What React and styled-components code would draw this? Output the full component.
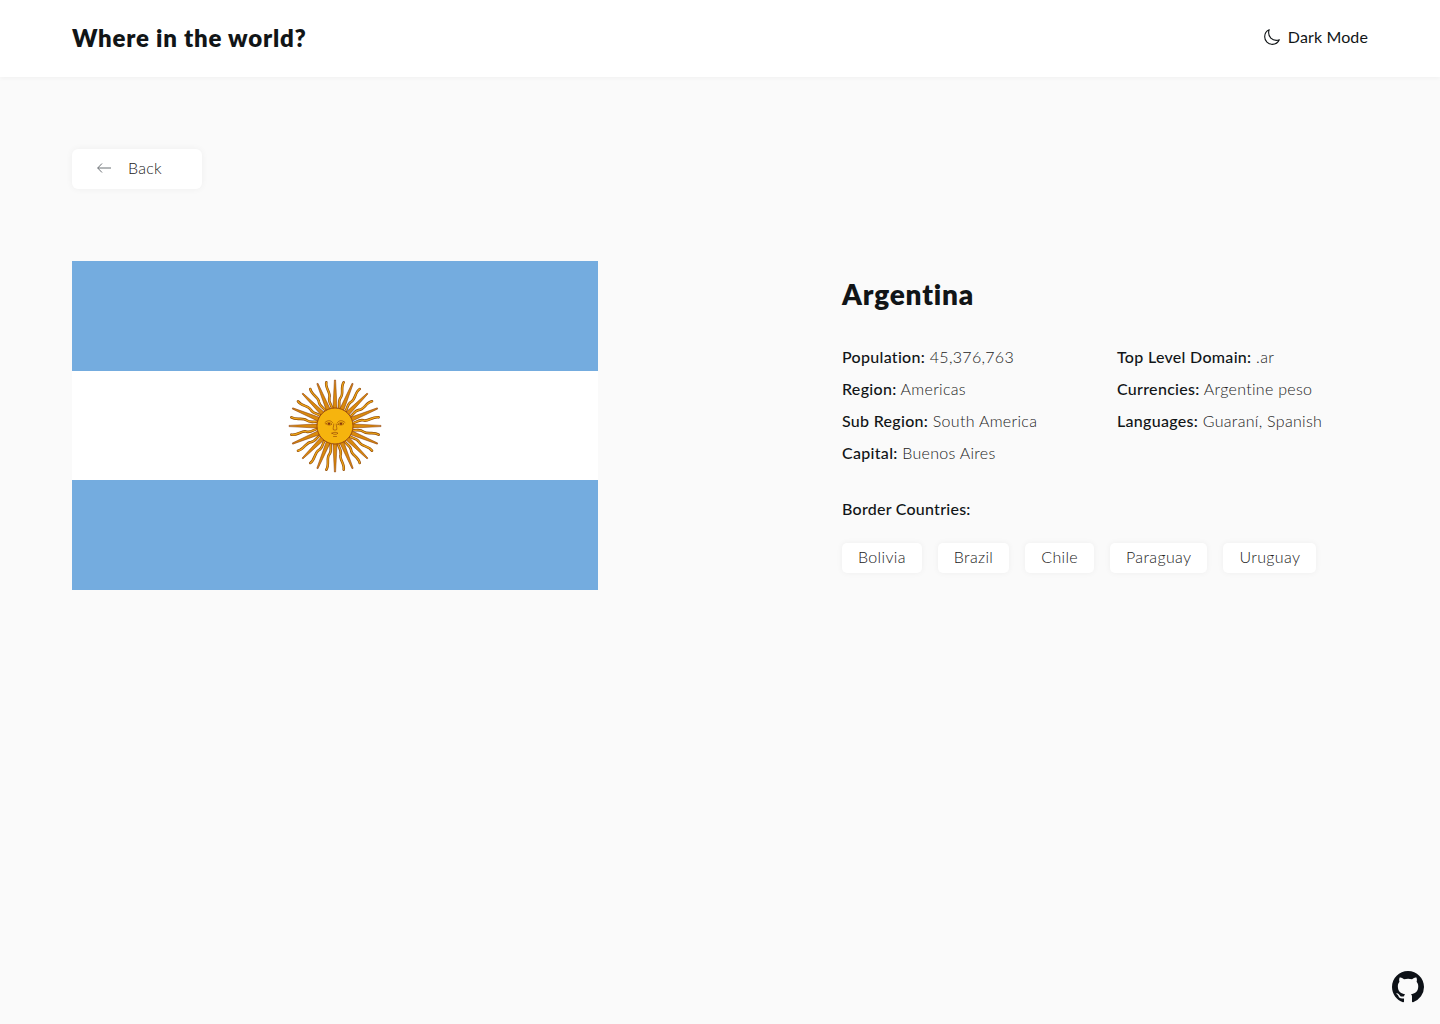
import React from "react";
import styled, { createGlobalStyle } from "styled-components";
import { IoMoonOutline } from "react-icons/io5";

const Global = createGlobalStyle`
  html, body { margin: 0; padding: 0; background: #fafafa; }
  body { font-family: "Lato", "Open Sans", sans-serif; color: #111517; min-height: 1024px; font-variant-ligatures: none; }
`;

const Header = styled.header`
  height: 77px; box-sizing: border-box; padding: 0 72px 4px; background: #fff;
  display: flex; align-items: center; justify-content: space-between;
  box-shadow: 0 2px 4px rgba(0,0,0,.03);
`;
const Logo = styled.h1`
  margin: 2px 0 0; font-size: 24px; font-weight: 800; letter-spacing: 0.78px; color: #111517;
`;
const ThemeToggle = styled.button`
  display: flex; align-items: center; gap: 7px; padding: 0; border: 0; background: none;
  font: 400 16px "Lato", sans-serif; letter-spacing: 0.12px; color: #111517;
`;
const Main = styled.main`
  padding: 72px 72px 0;
`;
const BackButton = styled.button`
  width: 130px; height: 40px; padding: 0 0 4px 25px; box-sizing: border-box; border: 0; border-radius: 6px; background: #fff;
  display: flex; align-items: center; gap: 17px;
  font: 300 16px "Lato", sans-serif; letter-spacing: 0.25px; color: #222;
  box-shadow: 0 0 7px rgba(0,0,0,.05);
`;
const BackArrow = styled.svg`
  width: 14px; height: 10px; margin-top: 2px; flex: none; fill: none; stroke: #6b7075; stroke-width: 1;
`;
const Content = styled.section`
  margin-top: 72px; display: flex; justify-content: space-between; align-items: flex-start;
`;
const Flag = styled.div`
  width: 526px; height: 329px; display: grid; grid-template-rows: 110px 109px 110px;
`;
const FlagBand = styled.div`
  background: ${p => (p.$white ? "#fff" : "#74acdf")};
  display: flex; align-items: center; justify-content: center;
`;
const Details = styled.div`
  width: 526px; padding-top: 15px;
`;
const Title = styled.h2`
  margin: 0; font-size: 28px; line-height: 36px; font-weight: 800; letter-spacing: 0.8px; color: #111517;
`;
const Stats = styled.div`
  margin-top: 29px; display: grid; grid-template-columns: 275px 1fr;
`;
const StatColumn = styled.div`
  display: flex; flex-direction: column;
`;
const Stat = styled.p`
  margin: 0; font-size: 16px; line-height: 32px; font-weight: 300; letter-spacing: 0.3px; color: #222;
  strong { font-weight: 500; color: #111517; letter-spacing: 0.3px; }
`;
const BorderLabel = styled.p`
  margin: 24px 0 0; font-size: 16px; line-height: 32px; font-weight: 500; letter-spacing: 0.25px; color: #111517;
`;
const Chips = styled.div`
  margin-top: 18px; display: flex; gap: 16px;
`;
const Chip = styled.span`
  height: 30px; box-sizing: border-box; padding: 0 16px 4px; display: flex; align-items: center; border-radius: 5px; background: #fff;
  font-size: 16px; font-weight: 300; letter-spacing: 0.35px; color: #222;
  box-shadow: 0 0 6px rgba(0,0,0,.05);
`;
const GithubLink = styled.a`
  position: fixed; right: 16px; bottom: 21px; width: 32px; height: 32px; color: #0d1117; display: block;
  svg { display: block; }
`;

const wavy = "M0 -15 C2.6 -19 -2.6 -24 0 -29 C2.6 -33 -2.4 -39 0 -44.5";
function Sun() {
  const rays = Array.from({ length: 32 }, (_, i) => i * 11.25);
  return (
    <svg width="94" height="94" viewBox="-47 -47 94 94" aria-hidden="true">
      {rays.map((a, i) =>
        i % 2 === 0 ? (
          <polygon key={a} transform={`rotate(${a})`} points="-2.2,-15 2.2,-15 0.6,-46 -0.6,-46" fill="#d98a0c" stroke="#85340a" strokeWidth="0.5" />
        ) : (
          <g key={a} transform={`rotate(${a})`}>
            <path d={wavy} fill="none" stroke="#8f4a0b" strokeWidth="2.6" strokeLinecap="round" />
            <path d={wavy} fill="none" stroke="#eea516" strokeWidth="1.3" strokeLinecap="round" />
          </g>
        )
      )}
      <circle r="18" fill="#f6b40e" stroke="#85340a" strokeWidth="0.8" />
      <g fill="none" stroke="#85340a" strokeWidth="0.55" strokeLinecap="round">
        <path d="M-10 -3.5 C-7 -6.5 -4 -5.5 -2.5 -3.5 M2.5 -3.5 C4 -5.5 7 -6.5 10 -3.5" />
        <path d="M-9 -2.2 C-7 -4 -4.5 -3.5 -3 -1.8 C-5 -0.6 -7 -0.6 -9 -2.2 Z M3 -1.8 C4.5 -3.5 7 -4 9 -2.2 C7 -0.6 5 -0.6 3 -1.8 Z" />
        <path d="M-1.2 -2 C-1.2 1 -2.6 3 -1.4 4 H1.4 C2.6 3 1.2 1 1.2 -2" />
        <path d="M-3 7.2 C-1.5 6 1.5 6 3 7.2 C1.5 8.8 -1.5 8.8 -3 7.2 Z M-1.5 10.5 H1.5" />
      </g>
      <circle cx="-6" cy="-2.2" r="1.1" fill="#85340a" />
      <circle cx="6" cy="-2.2" r="1.1" fill="#85340a" />
    </svg>
  );
}

const borders = ["Bolivia", "Brazil", "Chile", "Paraguay", "Uruguay"];

export default function App() {
  return (
    <>
      <Global />
      <Header>
        <Logo>Where in the world?</Logo>
        <ThemeToggle><IoMoonOutline size={18} />Dark Mode</ThemeToggle>
      </Header>
      <Main>
        <BackButton>
          <BackArrow viewBox="0 0 14 10" aria-hidden="true"><path d="M5 .5 .7 5 5 9.5M.7 5H14" /></BackArrow>
          Back
        </BackButton>
        <Content>
          <Flag>
            <FlagBand />
            <FlagBand $white><Sun /></FlagBand>
            <FlagBand />
          </Flag>
          <Details>
            <Title>Argentina</Title>
            <Stats>
              <StatColumn>
                <Stat><strong>Population:</strong> 45,376,763</Stat>
                <Stat><strong>Region:</strong> Americas</Stat>
                <Stat><strong>Sub Region:</strong> South America</Stat>
                <Stat><strong>Capital:</strong> Buenos Aires</Stat>
              </StatColumn>
              <StatColumn>
                <Stat><strong>Top Level Domain:</strong> .ar</Stat>
                <Stat><strong>Currencies:</strong> Argentine peso</Stat>
                <Stat><strong>Languages:</strong> Guaraní, Spanish</Stat>
              </StatColumn>
            </Stats>
            <BorderLabel>Border Countries:</BorderLabel>
            <Chips>{borders.map(b => <Chip key={b}>{b}</Chip>)}</Chips>
          </Details>
        </Content>
      </Main>
      <GithubLink href="#" aria-label="GitHub">
        <svg width="32" height="32" viewBox="0 0 16 16" fill="currentColor"><path fillRule="evenodd" d="M8 0C3.58 0 0 3.58 0 8c0 3.54 2.29 6.53 5.47 7.59.4.07.55-.17.55-.38 0-.19-.01-.82-.01-1.49-2.01.37-2.53-.49-2.69-.94-.09-.23-.48-.94-.82-1.13-.28-.15-.68-.52-.01-.53.63-.01 1.08.58 1.23.82.72 1.21 1.87.87 2.33.66.07-.52.28-.87.51-1.07-1.78-.2-3.64-.89-3.64-3.95 0-.87.31-1.59.82-2.15-.08-.2-.36-1.02.08-2.12 0 0 .67-.21 2.2.82.64-.18 1.32-.27 2-.27.68 0 1.36.09 2 .27 1.53-1.04 2.2-.82 2.2-.82.44 1.1.16 1.92.08 2.12.51.56.82 1.27.82 2.15 0 3.07-1.87 3.75-3.65 3.95.29.25.54.73.54 1.48 0 1.07-.01 1.93-.01 2.2 0 .21.15.46.55.38A8.013 8.013 0 0016 8c0-4.42-3.58-8-8-8z" /></svg>
      </GithubLink>
    </>
  );
}
